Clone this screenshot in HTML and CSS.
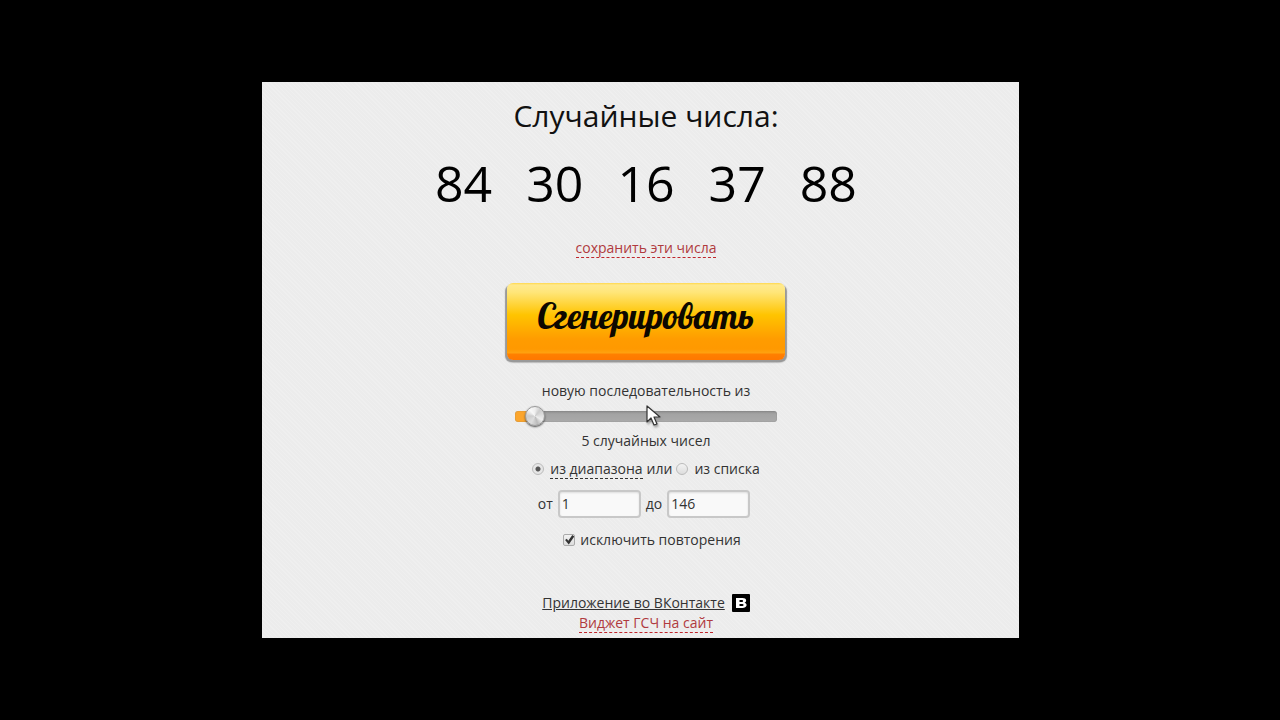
FILE: index.html
```html
<!DOCTYPE html>
<html lang="ru">
<head>
    <meta charset="UTF-8" />
    <meta name="viewport" content="width=device-width, initial-scale=1.0" />
    <title>Случайные числа</title>
    <link rel="stylesheet" href="styles.css">
</head>
<body>
    <main class="generator">
        <h1>Случайные числа:</h1>

        <div class="numbers">
            <span>84</span>
            <span>30</span>
            <span>16</span>
            <span>37</span>
            <span>88</span>
        </div>

        <a class="dashed red" href="#save">сохранить эти числа</a>

        <form class="settings">
            <button type="button" class="generate">Сгенерировать</button>

            <label for="count" class="count-label">новую последовательность из</label>
            <div class="slider">
                <input type="range" id="count" min="1" max="100" value="5">
                <svg class="pointer" width="16" height="24" viewBox="0 0 16 24" aria-hidden="true">
                    <path d="M1 1v16l4-4 3 7 3-1-3-7h6z" fill="#fff" stroke="#333" stroke-width="1.2" stroke-linejoin="round"/>
                </svg>
            </div>
            <output for="count">5 случайных чисел</output>

            <div class="source">
                <input type="radio" name="source" id="range" checked>
                <label for="range" class="dashed">из диапазона</label>
                <span>или</span>
                <input type="radio" name="source" id="list">
                <label for="list" class="list-label">из списка</label>
            </div>

            <div class="limits">
                <label for="from">от</label>
                <input type="text" id="from" value="1">
                <label for="to">до</label>
                <input type="text" id="to" value="146">
            </div>

            <div class="unique">
                <input type="checkbox" id="unique" checked>
                <label for="unique">исключить повторения</label>
            </div>
        </form>

        <footer>
            <a class="vk" href="#vk">
                <span>Приложение во ВКонтакте</span>
                <svg width="18" height="18" viewBox="0 0 18 18" aria-hidden="true">
                    <rect width="18" height="18" rx="1" fill="#000"/>
                    <path d="M4 4h6.500c4.500 0 4.500 3.800 2 4.800 3.500 1 2.500 5.200-2 5.200H4zM7.500 6v2H10c1.500 0 1.500-2 0-2zM7.500 10v2h2.800c1.700 0 1.700-2 0-2z" fill="#fff" fill-rule="evenodd"/>
                </svg>
            </a>
            <a class="dashed red" href="#widget">Виджет ГСЧ на сайт</a>
        </footer>
    </main>
</body>
</html>
```
FILE: styles.css
```css
* {
    box-sizing: border-box;
}

body {
    margin: 0;
    padding: 82px 20px;
    background-color: #000;
    color: #333;
    font-family: "Open Sans", sans-serif;
    font-size: 14px;
    line-height: 20px;
}

.generator {
    display: flex;
    flex-direction: column;
    align-items: center;
    max-width: 757px;
    margin: 0 auto;
    padding: 12px 0 5px 12px;
    background-color: #ededed;
    background-image: repeating-linear-gradient(45deg, #ececec 0, #ececec 2px, #efefef 2px, #efefef 3px);
}

h1 {
    margin: 0;
    color: #111;
    font-size: 30px;
    font-weight: 400;
    line-height: 44px;
}

.numbers {
    display: flex;
    gap: 34px;
    margin: 12px 0 22px;
    color: #000;
    font-size: 50px;
    line-height: 66px;
}

a {
    color: #333;
    text-decoration: none;
}

.dashed {
    border-bottom: 1px dashed #333;
    line-height: 19px;
}

.red {
    color: #b03a3e;
    border-color: #c0272d;
}

.settings {
    display: flex;
    flex-direction: column;
    align-items: center;
    margin-top: 25px;
}

.generate {
    width: 278px;
    height: 77px;
    padding: 0 0 11px;
    border: none;
    border-radius: 6px;
    background: linear-gradient(#ffd84a 0, #ffe98d 2px, #ffe67a 9px, #ffc400 32px, #ff9c00 56px, #ff9900 66px, #ffa210 70px, #ff8000 71px, #ff7800 100%);
    box-shadow: -2px 2px 1px #999, 2px 2px 1px #999, 0 2px 2px #666;
    color: #0d0800;
    font-family: "Lobster", "Liberation Serif", serif;
    font-size: 35px;
    cursor: pointer;
}

.count-label {
    margin-top: 21px;
}

.slider {
    position: relative;
    display: flex;
    width: 262px;
    height: 30px;
    align-items: center;
}

.slider input {
    width: 100%;
    height: 11px;
    margin: 0;
    border-radius: 3px;
    background: linear-gradient(90deg, #fba52c 20px, transparent 20px), linear-gradient(#8c8c8c, #a3a3a3 3px, #aaa);
    box-shadow: inset 0 0 1px #666;
    -webkit-appearance: none;
    appearance: none;
}

.slider input::-webkit-slider-thumb {
    -webkit-appearance: none;
    width: 20px;
    height: 20px;
    border: 1px solid #999;
    border-radius: 50%;
    background: conic-gradient(#eee, #ccc 40deg, #ddd 80deg, #eee 120deg, #bbb 160deg, #ddd 210deg, #ccc 270deg, #f8f8f8 320deg, #eee);
    box-shadow: 0 1px 2px #444;
}

/* mouse arrow over the track */
.pointer {
    position: absolute;
    top: 4px;
    left: 50%;
    filter: drop-shadow(1px 2px 1px #999);
}

.source {
    display: flex;
    align-items: center;
    gap: 4px;
    margin-top: 8px;
}

.source .list-label {
    margin-left: 2px;
}

input[type="radio"],
input[type="checkbox"] {
    width: 12px;
    height: 12px;
    margin: 0;
    border: 1px solid #aaa;
    background: linear-gradient(#f2f2f2, #ddd);
    -webkit-appearance: none;
    appearance: none;
}

input[type="radio"] {
    border-color: #bbb;
    border-radius: 50%;
}

.source input:first-child {
    margin-right: 2px;
}

input[type="radio"]:checked {
    background: radial-gradient(circle, #555 2px, #e6e6e6 3px);
}

input[type="checkbox"] {
    display: grid;
    place-items: center;
    border-radius: 2px;
}

input[type="checkbox"]:checked::before {
    content: "";
    width: 10px;
    height: 10px;
    background: #333;
    clip-path: polygon(8% 50%, 25% 38%, 40% 58%, 80% 0, 100% 15%, 45% 95%);
}

.limits {
    display: flex;
    align-items: center;
    gap: 5px;
    margin-top: 11px;
    padding-right: 4px;
}

.limits input {
    width: 83px;
    height: 28px;
    padding: 0 2px 2px;
    border: 2px solid #c8c8c8;
    border-radius: 4px;
    background-color: #f9f9f9;
    box-shadow: inset 0 1px 2px #ddd;
    color: #333;
    font: inherit;
}

.unique {
    display: flex;
    align-items: center;
    gap: 5px;
    margin-top: 12px;
    padding-left: 12px;
}

footer {
    display: flex;
    flex-direction: column;
    align-items: center;
    margin-top: 43px;
}

.vk {
    display: flex;
    align-items: center;
    gap: 7px;
}

.vk span {
    text-decoration: underline;
}
```
